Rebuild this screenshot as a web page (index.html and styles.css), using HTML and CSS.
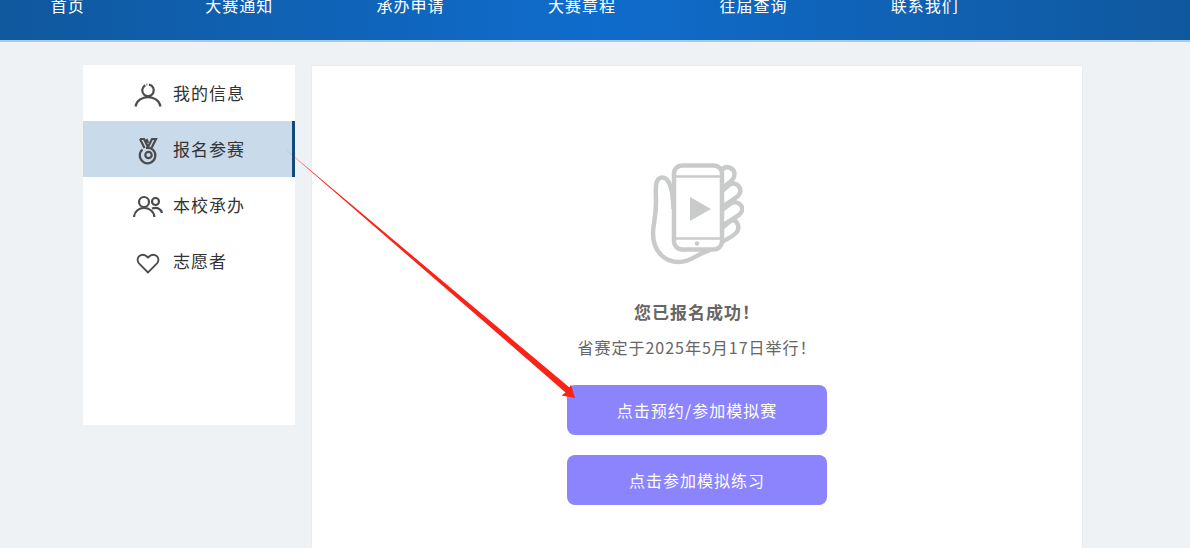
FILE: index.html
```
<!DOCTYPE html>
<html lang="zh-CN">
<head>
  <meta charset="UTF-8">
  <title>报名参赛</title>
  <link rel="stylesheet" href="styles.css">
</head>
<body>
  <header class="header">
    <nav class="nav">
      <a href="#">首页</a>
      <a href="#">大赛通知</a>
      <a href="#">承办申请</a>
      <a href="#">大赛章程</a>
      <a href="#">往届查询</a>
      <a href="#">联系我们</a>
    </nav>
  </header>

  <div class="container">
    <aside class="sidebar">
      <a href="#">
        <svg width="30" height="30" viewBox="0 0 30 30">
          <path d="M12.300 5.200A5.800 5.800 0 1 0 16 4.600M2.500 26.500C5 14 25 14 27.500 26.500"/>
          <path d="M13.500 4.500h.8"/>
        </svg>
        我的信息
      </a>
      <a href="#" class="active">
        <svg width="30" height="30" viewBox="0 0 30 30">
          <path d="M7 3h4l4 8 4-8h4l-4.500 9M7 3l4.500 9M13.500 3l1.500 4"/>
          <path d="M9.500 13.500A7.800 7.800 0 1 0 13 11.800h3"/>
          <circle cx="15.500" cy="19" r="3.200"/>
        </svg>
        报名参赛
      </a>
      <a href="#">
        <svg width="30" height="30" viewBox="0 0 30 30">
          <circle cx="11" cy="10" r="5"/>
          <circle cx="22.500" cy="9.500" r="3.500"/>
          <path d="M1 25C2 13 20 13 21.500 25M19 16.500c5-2 9 .5 10 4.500"/>
        </svg>
        本校承办
      </a>
      <a href="#">
        <svg width="30" height="30" viewBox="0 0 30 30">
          <path class="thin" d="M15 24.500L6 15.500C1.500 10 8.500 3 15 9.500 21.500 3 28.500 10 24 15.500z"/>
        </svg>
        志愿者
      </a>
    </aside>

    <main class="main">
      <svg class="phone" width="94" height="102" viewBox="0 0 94 102">
        <path d="M23.500 46C23 32 21 14 12 14.500 4 15 6 28 6 39 6 56 3 61 3 70c0 18 11 29 26 29 12 0 18-8 31-12"/>
        <rect x="24" y="2.500" width="48" height="84" rx="8"/>
        <path d="M72 7c3-5 12-3 12.500 4 .2 4-2 6-5 8.500l-7.500 6"/>
        <path d="M72 28l7.500-6.500c7-4 15 5 8.500 11.500L72 44"/>
        <path d="M72 47l9.500-7c8-3.500 15 6 7.500 12L72 63"/>
        <path d="M72 65l9-7.500c6-1.500 10 7 5 12.500-4 4-9 6-14 9"/>
        <path class="line" d="M24 13.500h48M24 75.500h48"/>
        <circle class="fill" cx="47" cy="80.500" r="2.200"/>
        <path class="fill" d="M40 34v24l21-12z"/>
      </svg>
      <h1>您已报名成功！</h1>
      <p>省赛定于2025年5月17日举行！</p>
      <button type="button">点击预约/参加模拟赛</button>
      <button type="button">点击参加模拟练习</button>
    </main>
  </div>

  <svg class="arrow" width="294" height="254" viewBox="0 0 294 254">
    <path d="M0 0L285.500 239.500 287 236.500 291 250 277.500 247.500 281.500 244.500z"/>
  </svg>
</body>
</html>
```
FILE: styles.css
```
* {
  box-sizing: border-box;
}

body {
  margin: 0;
  min-height: 100vh;
  display: flex;
  flex-direction: column;
  background: #eef2f5;
  color: #333;
  font-family: "Noto Sans CJK SC", sans-serif;
  font-size: 16px;
  letter-spacing: 1px;
}

a {
  color: inherit;
  text-decoration: none;
}

.header {
  background: linear-gradient(to right, #10589e, #0f6ccc 50%, #10589e);
  border-bottom: 2px solid #a3cbf3;
}

.nav {
  display: grid;
  grid-template-columns: repeat(7, 1fr);
  margin: 0 8px 0 -18px;
  padding-bottom: 30px;
  color: #fff;
  line-height: 10px;
  text-align: center;
}

.container {
  flex: 1;
  display: flex;
  align-items: flex-start;
  gap: 16px;
  padding: 23px 107px 0 83px;
}

.sidebar {
  flex: none;
  width: 212px;
  min-height: 360px;
  background: #fff;
}

.sidebar a {
  display: flex;
  align-items: center;
  gap: 10px;
  height: 56px;
  padding: 0 0 2px 50px;
  font-size: 17px;
}

.sidebar a.active {
  background: #c9daea;
  border-right: 3px solid #13497d;
}

.sidebar svg {
  margin-top: 6px;
  fill: none;
  stroke: #4c4c4c;
  stroke-width: 2.2;
}

.sidebar .thin {
  stroke-width: 1.8;
}

.main {
  flex: 1;
  align-self: stretch;
  display: flex;
  flex-direction: column;
  align-items: center;
  padding-top: 97px;
  background: #fff;
  border: 1px solid #eaedf0;
  border-bottom: 0;
  color: #666;
}

.phone {
  fill: none;
  stroke: #c9caca;
  stroke-width: 4.5;
}

.phone .line {
  stroke-width: 2.5;
}

.phone .fill {
  fill: #c9caca;
  stroke: none;
}

.main h1 {
  margin: 35px 0 0;
  font-size: 17px;
  line-height: 24px;
}

.main p {
  margin: 11px 0 26px;
  line-height: 24px;
}

.main button {
  width: 260px;
  height: 50px;
  margin-bottom: 20px;
  border: 0;
  border-radius: 8px;
  background: #8c84fc;
  color: #fff;
  font: inherit;
  letter-spacing: inherit;
}

/* pointer from the menu item to the first button */
.arrow {
  position: absolute;
  left: 284px;
  top: 148px;
  fill: #fa2317;
  pointer-events: none;
}
```
